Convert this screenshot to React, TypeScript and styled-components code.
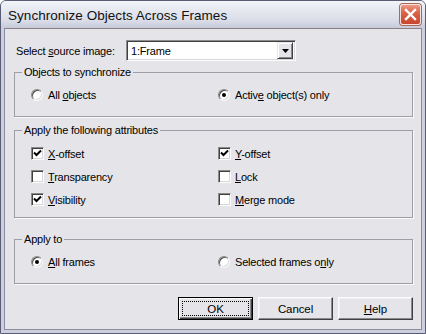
import React from "react";
import styled, { createGlobalStyle } from "styled-components";

const Global = createGlobalStyle`
  html, body { margin: 0; padding: 0; background: #ffffff; }
  body { font-family: "Liberation Sans", Arial, sans-serif; font-size: 11px; color: #000; }
  * { box-sizing: border-box; }
  u { text-decoration-thickness: 1px; text-underline-offset: 1px; }
`;

const FACE = "#e5e5e9";

const Window = styled.div`
  width: 426px;
  height: 334px;
  display: flex;
  flex-direction: column;
  border: 1px solid #585c74;
  border-radius: 6px 6px 0 0;
  background: #cdd0dc;
  overflow: hidden;
`;

const TitleBar = styled.div`
  height: 27px;
  flex: none;
  display: flex;
  align-items: center;
  justify-content: space-between;
  padding: 0 4px 0 7px;
  background: linear-gradient(to bottom, #f4f5f9 0%, #e6e8f0 35%, #d9dce7 75%, #c6c9d8 100%);
`;

const Title = styled.div`
  font-family: "Liberation Sans", Arial, sans-serif;
  font-size: 13.5px;
  color: #111;
  letter-spacing: 0.05px;
  padding-top: 1px;
`;

const CloseButton = styled.div`
  width: 21px;
  height: 21px;
  border-radius: 3px;
  border: 1px solid #f6e2dc;
  background: linear-gradient(to bottom, #eb9c86 0%, #d9634b 40%, #c8452f 100%);
  box-shadow: 0 0 0 1px #a8685a;
  display: flex;
  align-items: center;
  justify-content: center;
`;

const Frame = styled.div`
  flex: 1;
  display: flex;
  padding: 0 3px 3px;
`;

const Client = styled.div`
  flex: 1;
  display: flex;
  flex-direction: column;
  background: ${FACE};
  border: 1px solid #8a8da2;
  border-top-color: #8f7f86;
  padding: 11px 8px 0 9px;
`;

const SourceRow = styled.div`
  display: flex;
  align-items: center;
  height: 21px;
`;

const Label = styled.div`
  width: 110px;
  margin-left: 2px;
  letter-spacing: -0.2px;
`;

const Combo = styled.div`
  width: 170px;
  height: 21px;
  display: flex;
  align-items: center;
  justify-content: space-between;
  background: #fff;
  border: 1px solid;
  border-color: #8c8c8c #fcfcfc #fcfcfc #8c8c8c;
  box-shadow: inset 1px 1px 0 #404040, inset -1px -1px 0 #d8d8dc;
  padding: 2px 2px 2px 4px;
  letter-spacing: -0.2px;
`;

const DropButton = styled.div`
  width: 16px;
  height: 17px;
  background: ${FACE};
  border: 1px solid;
  border-color: #e8e8ec #404040 #404040 #e8e8ec;
  box-shadow: inset 1px 1px 0 #ffffff, inset -1px -1px 0 #8a8a8e;
  display: flex;
  align-items: center;
  justify-content: center;
`;

const Group = styled.div<{ $mt: number; $pb: number }>`
  margin-top: ${(p) => p.$mt}px;
  border: 1px solid #9e9ea6;
  box-shadow: 1px 1px 0 #fafafa;
  padding-bottom: ${(p) => p.$pb}px;
  display: flex;
  flex-direction: column;
`;

const Legend = styled.div`
  align-self: flex-start;
  height: 13px;
  line-height: 13px;
  margin: -7px 0 5px 7px;
  padding: 0 2px;
  background: ${FACE};
  letter-spacing: -0.2px;
`;

const OptionGrid = styled.div<{ $row: number }>`
  margin-left: 16px;
  display: grid;
  grid-template-columns: 187px 1fr;
  grid-auto-rows: ${(p) => p.$row}px;
`;

const Option = styled.div<{ $gap: number }>`
  display: flex;
  align-items: center;
  gap: ${(p) => p.$gap}px;
  letter-spacing: -0.2px;
`;

const RadioCircle = styled.span`
  width: 12px;
  height: 12px;
  border-radius: 50%;
  background: #fff;
  border: 1px solid;
  border-color: #8a8a8a #f6f6f6 #f6f6f6 #8a8a8a;
  box-shadow: inset 1px 1px 0 #505050, inset -1px -1px 0 #dcdcdc;
  display: flex;
  align-items: center;
  justify-content: center;
`;

const RadioDot = styled.span`
  width: 4px;
  height: 4px;
  border-radius: 50%;
  background: #000;
`;

const CheckBox = styled.span`
  width: 13px;
  height: 13px;
  background: #fff;
  border: 1px solid;
  border-color: #8a8a8a #fcfcfc #fcfcfc #8a8a8a;
  box-shadow: inset 1px 1px 0 #404040, inset -1px -1px 0 #d8d8dc;
  display: flex;
  align-items: center;
  justify-content: center;
`;

const ButtonRow = styled.div`
  margin-top: 13px;
  display: flex;
  justify-content: flex-end;
  gap: 5px;
`;

const Button = styled.div<{ $default?: boolean }>`
  width: 75px;
  height: 23px;
  display: flex;
  align-items: stretch;
  padding: ${(p) => (p.$default ? "3px" : "2px")};
  background: ${FACE};
  border: 1px solid;
  border-color: ${(p) => (p.$default ? "#000" : "#fcfcfc #404040 #404040 #fcfcfc")};
  box-shadow: ${(p) =>
    p.$default
      ? "inset 1px 1px 0 #fcfcfc, inset -1px -1px 0 #404040, inset -2px -2px 0 #8a8a8e"
      : "inset -1px -1px 0 #8a8a8e, inset 1px 1px 0 #f0f0f2"};
`;

const ButtonFace = styled.span<{ $focus?: boolean }>`
  flex: 1;
  display: flex;
  align-items: center;
  justify-content: center;
  border: 1px ${(p) => (p.$focus ? "dotted #000" : "solid transparent")};
  letter-spacing: -0.1px;
  font-size: 11.5px;
`;

const Radio = ({ checked, children }: { checked?: boolean; children: React.ReactNode }) => (
  <Option $gap={5}>
    <RadioCircle>{checked && <RadioDot />}</RadioCircle>
    <span>{children}</span>
  </Option>
);

const Check = ({ checked, children }: { checked?: boolean; children: React.ReactNode }) => (
  <Option $gap={4}>
    <CheckBox>
      {checked && (
        <svg width="9" height="9" viewBox="0 0 9 9">
          <polyline points="1,3.5 3.5,6 8,1.5" fill="none" stroke="#000" strokeWidth="2" />
        </svg>
      )}
    </CheckBox>
    <span>{children}</span>
  </Option>
);

export default function App() {
  return (
    <>
      <Global />
      <Window>
        <TitleBar>
          <Title>Synchronize Objects Across Frames</Title>
          <CloseButton>
            <svg width="13" height="13" viewBox="0 0 13 13">
              <path d="M2 2 L11 11 M11 2 L2 11" stroke="#fff" strokeWidth="2.4" strokeLinecap="square" />
            </svg>
          </CloseButton>
        </TitleBar>
        <Frame>
          <Client>
            <SourceRow>
              <Label>
                Select <u>s</u>ource image:
              </Label>
              <Combo>
                <span>1:Frame</span>
                <DropButton>
                  <svg width="7" height="4" viewBox="0 0 7 4">
                    <polygon points="0,0 7,0 3.5,4" fill="#000" />
                  </svg>
                </DropButton>
              </Combo>
            </SourceRow>

            <Group $mt={11} $pb={10}>
              <Legend>Objects to synchronize</Legend>
              <OptionGrid $row={22}>
                <Radio>
                  All <u>o</u>bjects
                </Radio>
                <Radio checked>
                  Activ<u>e</u> object(s) only
                </Radio>
              </OptionGrid>
            </Group>

            <Group $mt={13} $pb={6}>
              <Legend>Apply the following attributes</Legend>
              <OptionGrid $row={23}>
                <Check checked>
                  <u>X</u>-offset
                </Check>
                <Check checked>
                  <u>Y</u>-offset
                </Check>
                <Check>
                  <u>T</u>ransparency
                </Check>
                <Check>
                  <u>L</u>ock
                </Check>
                <Check checked>
                  <u>V</u>isibility
                </Check>
                <Check>
                  <u>M</u>erge mode
                </Check>
              </OptionGrid>
            </Group>

            <Group $mt={21} $pb={10}>
              <Legend>Apply to</Legend>
              <OptionGrid $row={22}>
                <Radio checked>
                  <u>A</u>ll frames
                </Radio>
                <Radio>
                  Selected frames o<u>n</u>ly
                </Radio>
              </OptionGrid>
            </Group>

            <ButtonRow>
              <Button $default>
                <ButtonFace $focus>OK</ButtonFace>
              </Button>
              <Button>
                <ButtonFace>Cancel</ButtonFace>
              </Button>
              <Button>
                <ButtonFace>
                  <u>H</u>elp
                </ButtonFace>
              </Button>
            </ButtonRow>
          </Client>
        </Frame>
      </Window>
    </>
  );
}
